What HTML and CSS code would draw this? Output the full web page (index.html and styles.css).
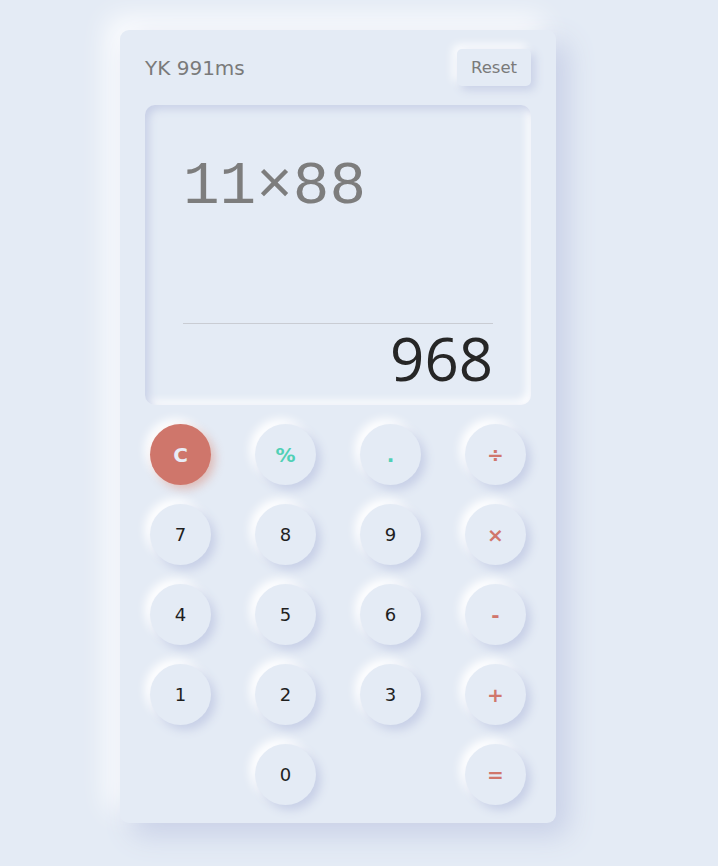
FILE: index.html
```html
<!DOCTYPE html>
<html lang="en">
<head>
<meta charset="utf-8">
<title>Calculator</title>
<link rel="stylesheet" href="styles.css">
</head>
<body>
<div class="calc">
  <div class="header">
    <span class="title">YK 991ms</span>
    <button class="reset">Reset</button>
  </div>
  <div class="display">
    <div class="expr">11×88</div>
    <div class="result-wrap"><div class="result">968</div></div>
  </div>
  <div class="keys">
    <button class="key clear">C</button>
    <button class="key teal">%</button>
    <button class="key teal">.</button>
    <button class="key op">÷</button>
    <button class="key">7</button>
    <button class="key">8</button>
    <button class="key">9</button>
    <button class="key op">×</button>
    <button class="key">4</button>
    <button class="key">5</button>
    <button class="key">6</button>
    <button class="key op">-</button>
    <button class="key">1</button>
    <button class="key">2</button>
    <button class="key">3</button>
    <button class="key op">+</button>
    <span class="blank"></span>
    <button class="key">0</button>
    <span class="blank"></span>
    <button class="key op">=</button>
  </div>
</div>
</body>
</html>
```

FILE: styles.css
```css
* { box-sizing: border-box; }
html, body { margin: 0; }
body {
  background: #e4ebf5;
  font-family: "DejaVu Sans", sans-serif;
  padding: 30px 0 0 120px;
  min-height: 866px;
}
.calc {
  width: 436px;
  height: 793px;
  border-radius: 9px;
  background: #e4ebf5;
  box-shadow: 12px 12px 28px #c8d0e7, -12px -12px 28px #ffffff;
  padding: 19px 25px 18px;
  display: flex;
  flex-direction: column;
  gap: 19px;
}
.header {
  display: flex;
  justify-content: space-between;
  align-items: center;
  height: 37px;
}
.title {
  font-size: 20px;
  color: #7a7a7a;
  margin-top: 1px;
}
.reset {
  font-family: "DejaVu Sans", sans-serif;
  font-size: 16.5px;
  color: #7a7a7a;
  background: #e4ebf5;
  border: none;
  border-radius: 5px;
  width: 74px;
  height: 37px;
  padding: 0;
  box-shadow: 4px 4px 10px #c8d0e7, -4px -4px 10px #ffffff;
}
.display {
  height: 300px;
  border-radius: 10px;
  background: #e4ebf5;
  box-shadow: inset 4px 4px 9px #c8d0e7, inset -4px -4px 9px #ffffff;
  padding: 52px 38px 17px 38px;
  display: flex;
  flex-direction: column;
  justify-content: space-between;
}
.expr {
  font-family: "Liberation Mono", monospace;
  font-size: 61px;
  line-height: 60px;
  color: #7d7d7d;
}
.result-wrap {
  border-top: 1px solid #c9ccd3;
  padding-top: 4px;
}
.result {
  text-align: right;
  font-family: "Open Sans", sans-serif;
  font-size: 60px;
  line-height: 60px;
  color: #262626;
}
.keys {
  display: grid;
  grid-template-columns: repeat(4, 61px);
  grid-auto-rows: 61px;
  justify-content: space-between;
  row-gap: 19px;
  padding: 0 5px;
}
.key {
  width: 61px;
  height: 61px;
  border-radius: 50%;
  border: none;
  padding: 0;
  background: #e4ebf5;
  font-family: "DejaVu Sans", sans-serif;
  font-size: 18px;
  color: #1f1f1f;
  box-shadow: 5px 5px 10px #c8d0e7, -5px -5px 10px #ffffff;
}
.op {
  color: #d0766c;
  font-weight: bold;
  font-size: 20px;
}
.teal {
  color: #50d0b5;
  font-weight: bold;
  font-size: 20px;
}
.clear {
  background: #cf766b;
  color: #e8ecf6;
  font-weight: bold;
  font-size: 20px;
  box-shadow: 4px 4px 10px rgba(214, 130, 110, 0.45), -5px -5px 10px #ffffff;
}
```
